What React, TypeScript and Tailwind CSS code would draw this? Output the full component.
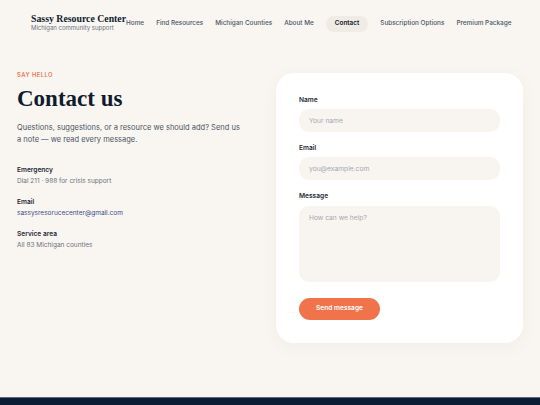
const navItems = [
  'Home',
  'Find Resources',
  'Michigan Counties',
  'About Me',
  'Contact',
  'Subscription Options',
  'Premium Package',
];

const details = [
  { label: 'Emergency', value: 'Dial 211 · 988 for crisis support' },
  { label: 'Email', value: 'sassysresorucecenter@gmail.com', link: true },
  { label: 'Service area', value: 'All 83 Michigan counties' },
];

function Field({ label, placeholder }: { label: string; placeholder: string }) {
  return (
    <div className="flex flex-col gap-[4px]">
      <label className="text-[6.6px] font-semibold leading-[10px] text-[#1f2937]">{label}</label>
      <input
        placeholder={placeholder}
        className="h-[23px] w-full rounded-[10px] bg-[#f8f5f0] px-[10px] text-[6.7px] outline-none placeholder:text-[#a3a8b0]"
      />
    </div>
  );
}

export default function App() {
  return (
    <div className="flex min-h-[405px] flex-col bg-[#f9f6f1] font-['Inter',sans-serif]">
      <header className="flex h-[46px] items-center justify-between whitespace-nowrap px-[31px]">
        <div className="flex shrink-0 flex-col pb-[1px]">
          <span className="font-['Liberation_Serif',serif] text-[9.8px] font-bold leading-[11px] text-[#0f1b2e]">
            Sassy Resource Center
          </span>
          <span className="text-[6px] leading-[8px] text-[#6b7280]">Michigan community support</span>
        </div>
        <nav className="flex shrink-0 items-center gap-[12px] pt-[2px]">
          {navItems.map((item) =>
            item === 'Contact' ? (
              <span
                key={item}
                className="flex h-[16px] items-center rounded-full bg-[#efebe5] px-[9px] text-[6.4px] font-semibold text-[#111827]"
              >
                {item}
              </span>
            ) : (
              <span key={item} className="text-[6.4px] font-medium text-[#4b5563]">
                {item}
              </span>
            )
          )}
        </nav>
      </header>

      <main className="grid grid-cols-[242px_247px] items-start gap-[17px] px-[17px] pt-[25px]">
        <section className="flex flex-col">
          <span className="text-[5.8px] font-semibold uppercase leading-[8px] tracking-[0.08em] text-[#e8795a]">
            Say hello
          </span>
          <h1 className="mt-[5px] font-['Liberation_Serif',serif] text-[23px] font-bold leading-[30px] text-[#0f1b2e]">
            Contact us
          </h1>
          <p className="mt-[8px] w-[226px] text-[7.5px] leading-[12px] text-[#4b5563]">
            Questions, suggestions, or a resource we should add? Send us a note — we read every message.
          </p>
          <div className="mt-[19px] flex flex-col gap-[11px]">
            {details.map((d) => (
              <div key={d.label} className="flex flex-col gap-[1px]">
                <span className="text-[6.6px] font-semibold leading-[10px] text-[#1f2937]">{d.label}</span>
                <span
                  className={
                    d.link
                      ? 'text-[6.5px] leading-[10px] text-[#3b4a8a]'
                      : 'text-[6.5px] leading-[10px] text-[#6b7280]'
                  }
                >
                  {d.value}
                </span>
              </div>
            ))}
          </div>
        </section>

        <section className="mt-[2px] flex h-[270px] flex-col rounded-[18px] bg-white px-[23px] pt-[22px] shadow-[0_4px_16px_rgba(120,100,70,0.06)]">
          <Field label="Name" placeholder="Your name" />
          <div className="mt-[11px]">
            <Field label="Email" placeholder="you@example.com" />
          </div>
          <div className="mt-[11px] flex flex-col gap-[5px]">
            <label className="text-[6.6px] font-semibold leading-[10px] text-[#1f2937]">Message</label>
            <textarea
              placeholder="How can we help?"
              className="h-[76px] w-full resize-none rounded-[10px] bg-[#f8f5f0] px-[10px] py-[7px] text-[6.7px] outline-none placeholder:text-[#a3a8b0]"
            />
          </div>
          <button className="mt-[16px] h-[22px] w-[81px] rounded-full bg-[#f0734c] text-[6.6px] font-semibold text-white">
            Send message
          </button>
        </section>
      </main>

      <div className="flex-1" />
      <footer className="h-[8px] border-t border-[#5b6b7e] bg-[#0b1d35]" />
    </div>
  );
}
